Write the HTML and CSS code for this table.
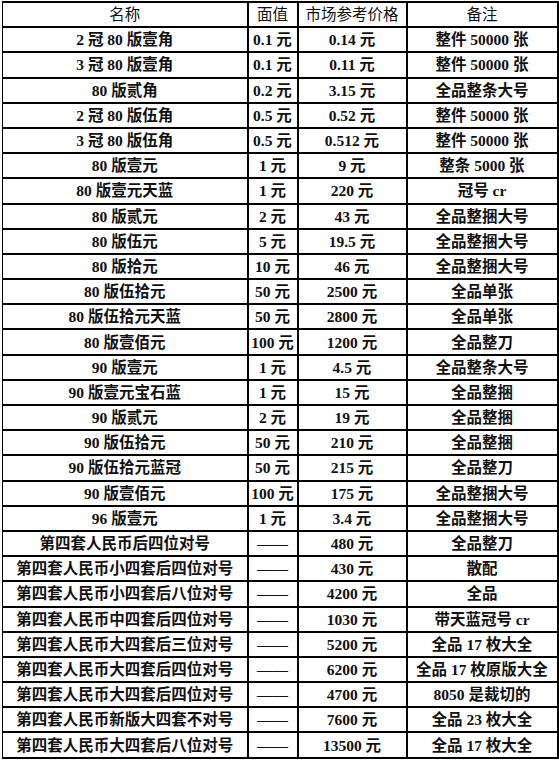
FILE: index.html
```html
<!DOCTYPE html>
<html lang="zh-CN">
<head>
<meta charset="utf-8">
<title>人民币参考价格</title>
<link rel="stylesheet" href="styles.css">
</head>
<body>
<table class="price-table">
<colgroup>
<col class="c-name"><col class="c-face"><col class="c-price"><col class="c-note">
</colgroup>
<thead>
<tr><th>名称</th><th>面值</th><th>市场参考价格</th><th>备注</th></tr>
</thead>
<tbody>
<tr><td>2 冠 80 版壹角</td><td>0.1 元</td><td>0.14 元</td><td>整件 50000 张</td></tr>
<tr><td>3 冠 80 版壹角</td><td>0.1 元</td><td>0.11 元</td><td>整件 50000 张</td></tr>
<tr><td>80 版贰角</td><td>0.2 元</td><td>3.15 元</td><td>全品整条大号</td></tr>
<tr><td>2 冠 80 版伍角</td><td>0.5 元</td><td>0.52 元</td><td>整件 50000 张</td></tr>
<tr><td>3 冠 80 版伍角</td><td>0.5 元</td><td>0.512 元</td><td>整件 50000 张</td></tr>
<tr><td>80 版壹元</td><td>1 元</td><td>9 元</td><td>整条 5000 张</td></tr>
<tr><td>80 版壹元天蓝</td><td>1 元</td><td>220 元</td><td>冠号 cr</td></tr>
<tr><td>80 版贰元</td><td>2 元</td><td>43 元</td><td>全品整捆大号</td></tr>
<tr><td>80 版伍元</td><td>5 元</td><td>19.5 元</td><td>全品整捆大号</td></tr>
<tr><td>80 版拾元</td><td>10 元</td><td>46 元</td><td>全品整捆大号</td></tr>
<tr><td>80 版伍拾元</td><td>50 元</td><td>2500 元</td><td>全品单张</td></tr>
<tr><td>80 版伍拾元天蓝</td><td>50 元</td><td>2800 元</td><td>全品单张</td></tr>
<tr><td>80 版壹佰元</td><td>100 元</td><td>1200 元</td><td>全品整刀</td></tr>
<tr><td>90 版壹元</td><td>1 元</td><td>4.5 元</td><td>全品整条大号</td></tr>
<tr><td>90 版壹元宝石蓝</td><td>1 元</td><td>15 元</td><td>全品整捆</td></tr>
<tr><td>90 版贰元</td><td>2 元</td><td>19 元</td><td>全品整捆</td></tr>
<tr><td>90 版伍拾元</td><td>50 元</td><td>210 元</td><td>全品整捆</td></tr>
<tr><td>90 版伍拾元蓝冠</td><td>50 元</td><td>215 元</td><td>全品整刀</td></tr>
<tr><td>90 版壹佰元</td><td>100 元</td><td>175 元</td><td>全品整捆大号</td></tr>
<tr><td>96 版壹元</td><td>1 元</td><td>3.4 元</td><td>全品整捆大号</td></tr>
<tr><td>第四套人民币后四位对号</td><td>——</td><td>480 元</td><td>全品整刀</td></tr>
<tr><td>第四套人民币小四套后四位对号</td><td>——</td><td>430 元</td><td>散配</td></tr>
<tr><td>第四套人民币小四套后八位对号</td><td>——</td><td>4200 元</td><td>全品</td></tr>
<tr><td>第四套人民币中四套后四位对号</td><td>——</td><td>1030 元</td><td>带天蓝冠号 cr</td></tr>
<tr><td>第四套人民币大四套后三位对号</td><td>——</td><td>5200 元</td><td>全品 17 枚大全</td></tr>
<tr><td>第四套人民币大四套后四位对号</td><td>——</td><td>6200 元</td><td>全品 17 枚原版大全</td></tr>
<tr><td>第四套人民币大四套后四位对号</td><td>——</td><td>4700 元</td><td>8050 是裁切的</td></tr>
<tr><td>第四套人民币新版大四套不对号</td><td>——</td><td>7600 元</td><td>全品 23 枚大全</td></tr>
<tr><td>第四套人民币大四套后八位对号</td><td>——</td><td>13500 元</td><td>全品 17 枚大全</td></tr>
</tbody>
</table>
</body>
</html>
```

FILE: styles.css
```css
html, body {
  margin: 0;
  padding: 0;
  background: #ffffff;
}

body {
  padding: 1px 0 0 2px;
}

.price-table {
  border-collapse: collapse;
  table-layout: fixed;
  width: 555px;
  font-family: "Liberation Serif", "Noto Sans CJK SC", serif;
  font-size: 15.5px;
  color: #111;
}

.c-name { width: 245px; }
.c-face { width: 50px; }
.c-price { width: 109px; }
.c-note { width: 151px; }

.price-table th,
.price-table td {
  border: 2px solid #000;
  height: 23.2px;
  padding: 0;
  text-align: center;
  vertical-align: middle;
  white-space: nowrap;
  line-height: 21px;
  overflow: hidden;
}

.price-table th {
  font-weight: normal;
}

.price-table td {
  font-weight: bold;
}

.price-table tr > :first-child {
  border-left-width: 1px;
}
```
